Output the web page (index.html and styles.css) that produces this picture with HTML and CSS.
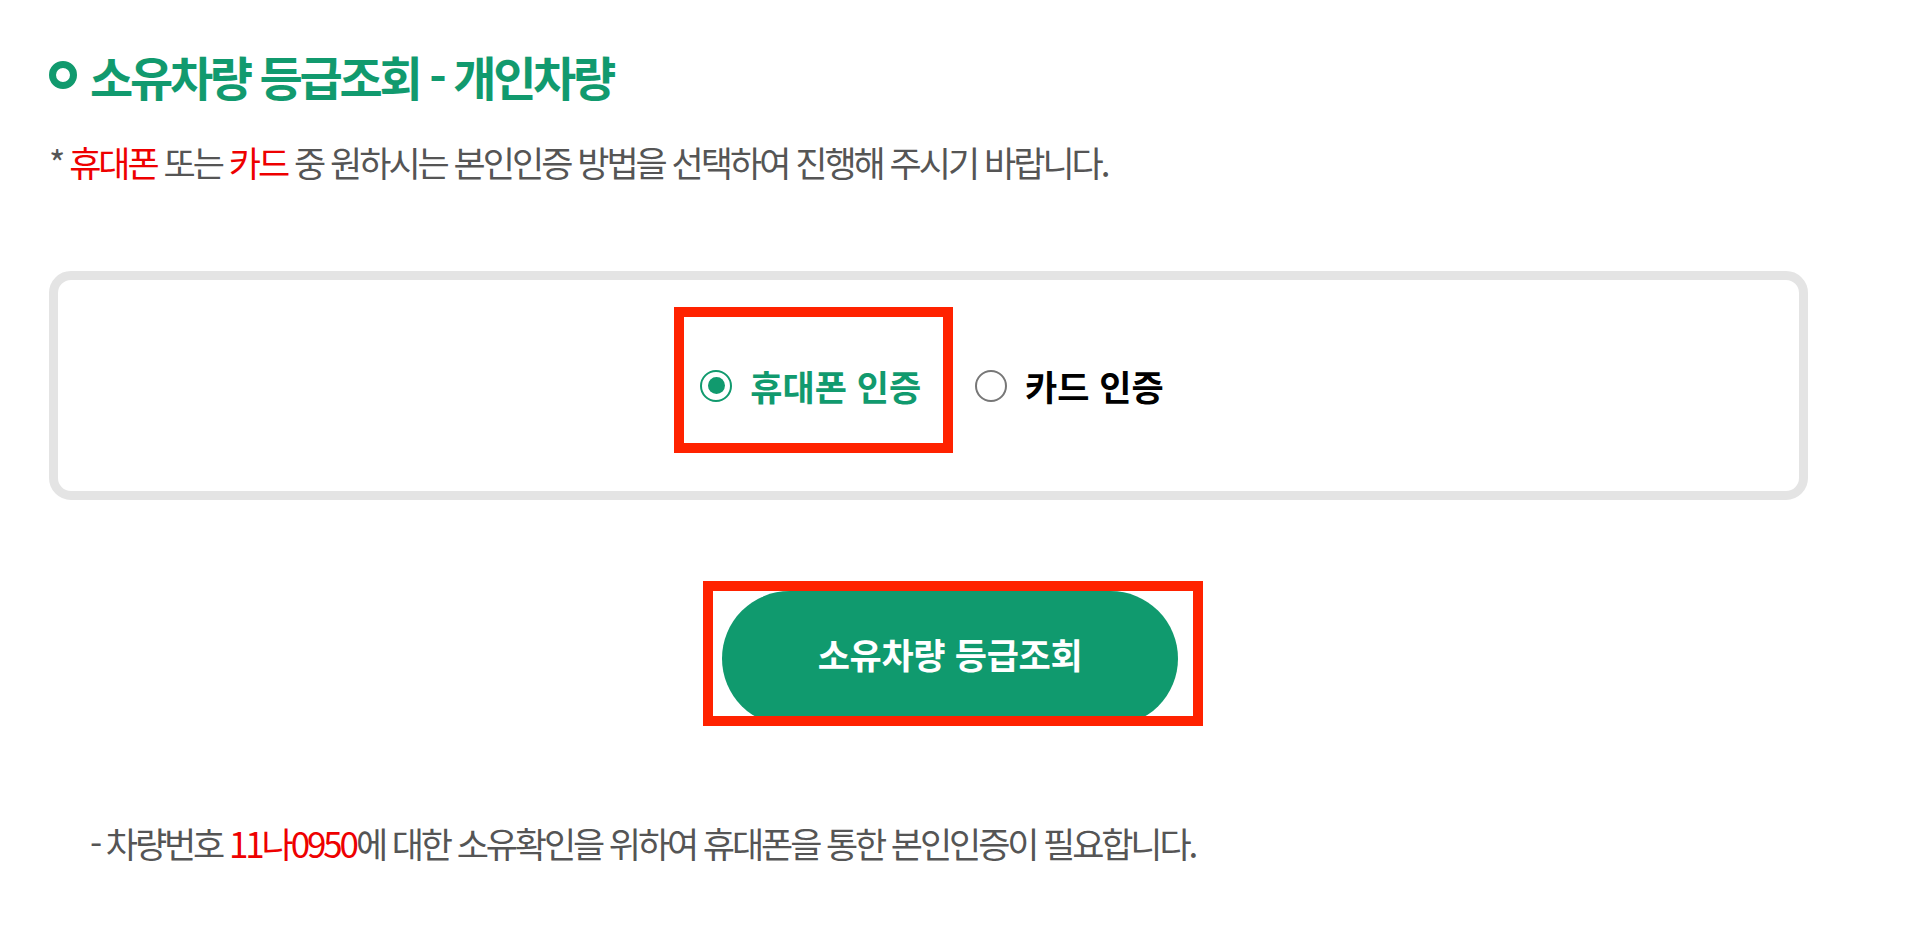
FILE: index.html
```html
<!DOCTYPE html>
<html lang="ko">
<head>
<meta charset="utf-8">
<title>소유차량 등급조회 - 개인차량</title>
<link rel="stylesheet" href="styles.css">
</head>
<body>
<div class="page">
  <h2 class="title"><span class="title-dot"></span><span class="title-text">소유차량 등급조회 - 개인차량</span></h2>
  <p class="guide">* <em>휴대폰</em> 또는 <em>카드</em> 중 원하시는 본인인증 방법을 선택하여 진행해 주시기 바랍니다.</p>
  <div class="auth-box">
    <label class="opt opt-on marked"><span class="radio radio-on"></span><span class="opt-text">휴대폰 인증</span></label>
    <label class="opt"><span class="radio"></span><span class="opt-text">카드 인증</span></label>
  </div>
  <div class="btn-row">
    <span class="btn-wrap"><button class="btn" type="button">소유차량 등급조회</button></span>
  </div>
  <p class="note">- 차량번호 <em>11나0950</em>에 대한 소유확인을 위하여 휴대폰을 통한 본인인증이 필요합니다.</p>
</div>
</body>
</html>
```
FILE: styles.css
```css
* { box-sizing: border-box; }
html, body { margin: 0; padding: 0; background: #fff; }
body {
  font-family: "Noto Sans CJK KR", "Noto Sans", sans-serif;
  color: #555;
}
.page {
  width: 1808px;
  padding: 47px 0 0 49px;
}
.title {
  display: flex;
  align-items: center;
  margin: 0;
  height: 57px;
  font-size: 47px;
  font-weight: 700;
  line-height: 57px;
  letter-spacing: -3.3px;
  color: #119a6e;
}
.title-dot {
  width: 28px;
  height: 28px;
  border: 7px solid #119a6e;
  border-radius: 50%;
  margin: -2px 13px 0 0;
  flex: none;
}
.guide {
  margin: 38px 0 0 0;
  font-size: 35px;
  line-height: 40px;
  letter-spacing: -3px;
  color: #555;
}
.guide em, .note em {
  font-style: normal;
  color: #ee0000;
}
.auth-box {
  margin-top: 89px;
  height: 229px;
  border: 9px solid #e4e4e4;
  border-radius: 22px;
  display: flex;
  align-items: center;
  justify-content: center;
  gap: 54px;
  padding-left: 7px;
}
.opt {
  position: relative;
  display: flex;
  align-items: center;
  gap: 18px;
  height: 40px;
  font-size: 35px;
  font-weight: 700;
  color: #000;
  line-height: 40px;
}
.opt-on { color: #119a6e; }
.radio {
  width: 32px;
  height: 32px;
  border: 2px solid #777;
  border-radius: 50%;
  display: flex;
  align-items: center;
  justify-content: center;
  flex: none;
}
.radio-on { border-color: #119a6e; }
.radio-on::before {
  content: "";
  width: 17px;
  height: 17px;
  border-radius: 50%;
  background: #119a6e;
}
.marked::after {
  content: "";
  position: absolute;
  left: -26px;
  right: -32px;
  top: -59px;
  bottom: -47px;
  border: 10px solid #ff2200;
  pointer-events: none;
}
.btn-row {
  margin-top: 91px;
  display: flex;
  justify-content: center;
  padding-left: 43px;
}
.btn-wrap {
  position: relative;
  display: block;
}
.btn {
  display: block;
  width: 456px;
  height: 135px;
  border: 0;
  border-radius: 68px;
  background: #109a6e;
  color: #fff;
  font-family: "Noto Sans CJK KR", "Noto Sans", sans-serif;
  font-size: 35px;
  font-weight: 700;
  padding: 0 0 10px 0;
  letter-spacing: -0.3px;
}
.btn-wrap::after {
  content: "";
  position: absolute;
  left: -19px;
  right: -25px;
  top: -10px;
  bottom: 0;
  border: 10px solid #ff2200;
  pointer-events: none;
}
.note {
  margin: 97px 0 0 41px;
  font-size: 35px;
  line-height: 40px;
  letter-spacing: -3.1px;
  color: #555;
}
```
